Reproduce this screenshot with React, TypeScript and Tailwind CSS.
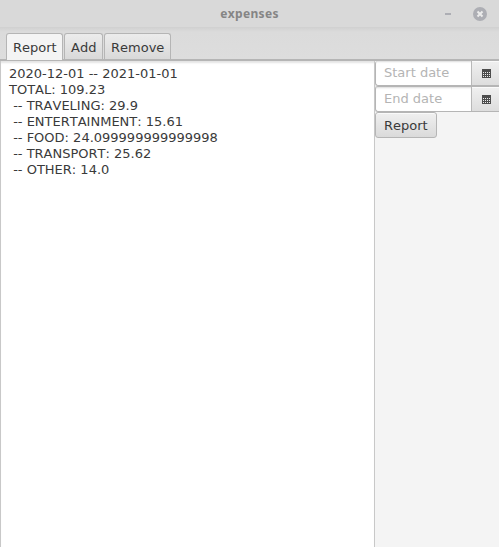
import React from 'react';

const lines = [
  '2020-12-01 -- 2021-01-01',
  'TOTAL: 109.23',
  ' -- TRAVELING: 29.9',
  ' -- ENTERTAINMENT: 15.61',
  ' -- FOOD: 24.099999999999998',
  ' -- TRANSPORT: 25.62',
  ' -- OTHER: 14.0',
];

function CalendarIcon() {
  return (
    <svg width="9" height="9" viewBox="0 0 9 9" className="shrink-0" shapeRendering="crispEdges">
      <path d="M0 0h9v9h-9z" fill="#4c4c4c" />
      {[3, 5, 7].map((y) =>
        [1, 3, 5, 7].map((x) => <rect key={`${x}-${y}`} x={x} y={y} width="1" height="1" fill="#ededed" />)
      )}
    </svg>
  );
}

function DateField({ placeholder, first = false }: { placeholder: string; first?: boolean }) {
  return (
    <div className={`flex rounded-l-[3px] border-b border-l border-[#b5b5b5] bg-white ${first ? 'h-[25px]' : 'h-[26px] border-t'}`}>
      <div className="flex w-[95px] items-center pl-2 text-[#b4b4b4] shadow-[inset_0_2px_2px_-1px_#dcdcdc]">
        {placeholder}
      </div>
      <div className="flex flex-1 items-center border-l border-[#b8b8b8] bg-linear-to-b from-[#f0f0f0] to-[#dddddd] pl-[10px] pt-px shadow-[inset_0_1px_0_#fafafa]">
        <CalendarIcon />
      </div>
    </div>
  );
}

export default function App() {
  return (
    <div className="flex h-[547px] w-[499px] flex-col overflow-hidden bg-[#f4f4f4] font-['DejaVu_Sans',sans-serif] text-[13px] leading-4 text-[#3a3a3a] [font-kerning:none]">
      <header className="grid h-[27px] shrink-0 grid-cols-[1fr_auto_1fr] items-center bg-[#d9d9d9]">
        <span />
        <h1 className="font-['Noto_Sans',sans-serif] text-[12px] font-bold tracking-[0.35px] text-[#858585]">expenses</h1>
        <div className="flex items-center justify-end gap-[22px] pr-3">
          <svg width="6" height="14" viewBox="0 0 6 14">
            <path d="M0 6h6v2H0z" fill="#adaeb4" />
          </svg>
          <svg width="14" height="14" viewBox="0 0 14 14">
            <circle cx="7" cy="7" r="7" fill="#adaeb4" />
            <path d="M4.5 4.5l5 5M9.5 4.5l-5 5" stroke="#ececec" strokeWidth="2" />
          </svg>
        </div>
      </header>
      <nav className="flex h-[34px] shrink-0 items-end gap-px border-b-2 border-[#b5b5b5] bg-linear-to-b from-[#d0d0d0] via-[#dbdbdb] via-15% to-[#dddddd] pl-[6px]">
        <div className="-mb-px flex h-[27px] w-[57px] rounded-t-[3px] border border-b-0 border-[#b5b5b5] bg-[#f4f4f4] pl-[6px] pt-[6px]">Report</div>
        <div className="flex h-[26px] w-[39px] rounded-t-[3px] border border-b-0 border-[#b5b5b5] bg-linear-to-b from-[#ececec] to-[#d9d9d9] pl-[6px] pt-[6px]">Add</div>
        <div className="flex h-[26px] w-[67px] rounded-t-[3px] border border-b-0 border-[#b5b5b5] bg-linear-to-b from-[#ececec] to-[#d9d9d9] pl-[6px] pt-[6px]">Remove</div>
      </nav>
      <main className="flex min-h-0 flex-1">
        <section className="w-[375px] whitespace-pre border-x border-[#c8c8c8] bg-white pl-2 pt-[5px] shadow-[inset_0_3px_2px_-1px_#e4e4e4]">
          {lines.map((line) => (
            <div key={line} className="h-4">{line}</div>
          ))}
        </section>
        <aside className="flex-1">
          <DateField placeholder="Start date" first />
          <DateField placeholder="End date" />
          <button className="flex h-[26px] w-[62px] items-center rounded-[3px] border border-[#b5b5b5] bg-linear-to-b from-[#f0f0f0] to-[#dadada] pl-2 pt-px shadow-[inset_0_1px_0_#fafafa]">Report</button>
        </aside>
      </main>
    </div>
  );
}
